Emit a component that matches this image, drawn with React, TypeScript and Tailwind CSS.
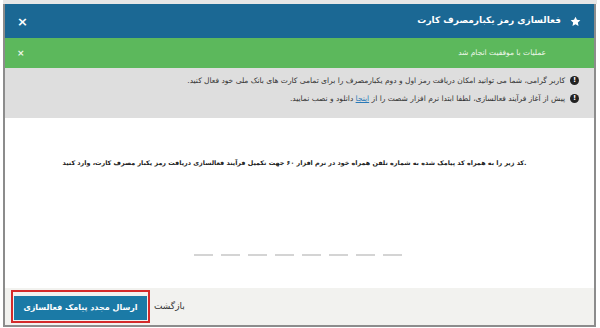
import { useState } from "react";

const font = { fontFamily: '"DejaVu Sans", "Noto Sans", sans-serif' };

function Star() {
  return (
    <svg width="11" height="11" viewBox="0 0 24 24" className="fill-white">
      <path d="M12 1.5l3.2 6.9 7.4.8-5.5 5.1 1.5 7.4L12 17.9l-6.6 3.8 1.5-7.4L1.4 9.2l7.4-.8z" />
    </svg>
  );
}

function InfoDot() {
  return (
    <span className="inline-flex items-center justify-center w-[9px] h-[9px] rounded-full bg-[#222] text-white text-[7px] font-bold leading-none shrink-0">
      !
    </span>
  );
}

export default function App() {
  const [digits] = useState(["", "", "", "", "", "", "", ""]);

  return (
    <div className="w-[600px] h-[328px] bg-white overflow-hidden" style={font}>
      <div className="h-[4px] bg-[#e6e6e6] mx-[3px]" />
      <div className="mx-[3px] w-[593px] border-x-2 border-b-2 border-[#8c8c8c] flex flex-col">
        <div dir="rtl" className="h-[34px] bg-[#1b6894] flex items-center justify-between pr-[13px] pl-[12px]">
          <div className="flex items-center gap-[9px]">
            <Star />
            <span className="text-white text-[9px] font-bold">فعالسازی رمز یکبارمصرف کارت</span>
          </div>
          <span className="text-white text-[13px] font-bold leading-none">×</span>
        </div>

        <div dir="rtl" className="h-[30px] bg-[#5cb85c] flex items-center justify-between pr-[48px] pl-[12px]">
          <span className="text-[#eef7ea] text-[7.5px]">عملیات با موفقیت انجام شد</span>
          <span className="text-[#eef7ea] text-[9px] font-bold leading-none">×</span>
        </div>

        <div dir="rtl" className="h-[50px] bg-[#dedede] flex flex-col gap-[7px] pt-[7px] pr-[15px] text-[7.5px] text-[#333]">
          <div className="flex items-center gap-[5px]">
            <InfoDot />
            <span>کاربر گرامی، شما می توانید امکان دریافت رمز اول و دوم یکبارمصرف را برای تمامی کارت های بانک ملی خود فعال کنید.</span>
          </div>
          <div className="flex items-center gap-[5px]">
            <InfoDot />
            <span>
              پیش از آغاز فرآیند فعالسازی، لطفا ابتدا نرم افزار شصت را از{" "}
              <span className="text-[#2a7ab8] underline">اینجا</span> دانلود و نصب نمایید.
            </span>
          </div>
        </div>

        <div className="h-[170px] bg-white flex flex-col items-center">
          <p dir="rtl" className="mt-[41px] mr-[10px] text-[6.4px] font-bold text-[#222] whitespace-nowrap">
            .کد زیر را به همراه کد پیامک شده به شماره تلفن همراه خود در نرم افزار ۶۰ جهت تکمیل فرآیند فعالسازی دریافت رمز یکبار مصرف کارت، وارد کنید
          </p>
          <div className="mt-[85px] flex gap-[8px] mr-[4px]">
            {digits.map((d, i) => (
              <div key={i} className="w-[19px] h-[2px] bg-[#d4d4d4]">
                {d}
              </div>
            ))}
          </div>
        </div>

        <div className="h-[37px] bg-[#f2f2ef] flex items-center pl-[6px] gap-[4px]">
          <div className="border-2 border-[#d42a2a] p-[1px]">
            <button dir="rtl" className="w-[133px] h-[24px] bg-[#1b7aa6] text-white text-[8px] font-bold">
              ارسال مجدد پیامک فعالسازی
            </button>
          </div>
          <span dir="rtl" className="text-[9px] text-[#333]">بازگشت</span>
        </div>
      </div>
    </div>
  );
}
